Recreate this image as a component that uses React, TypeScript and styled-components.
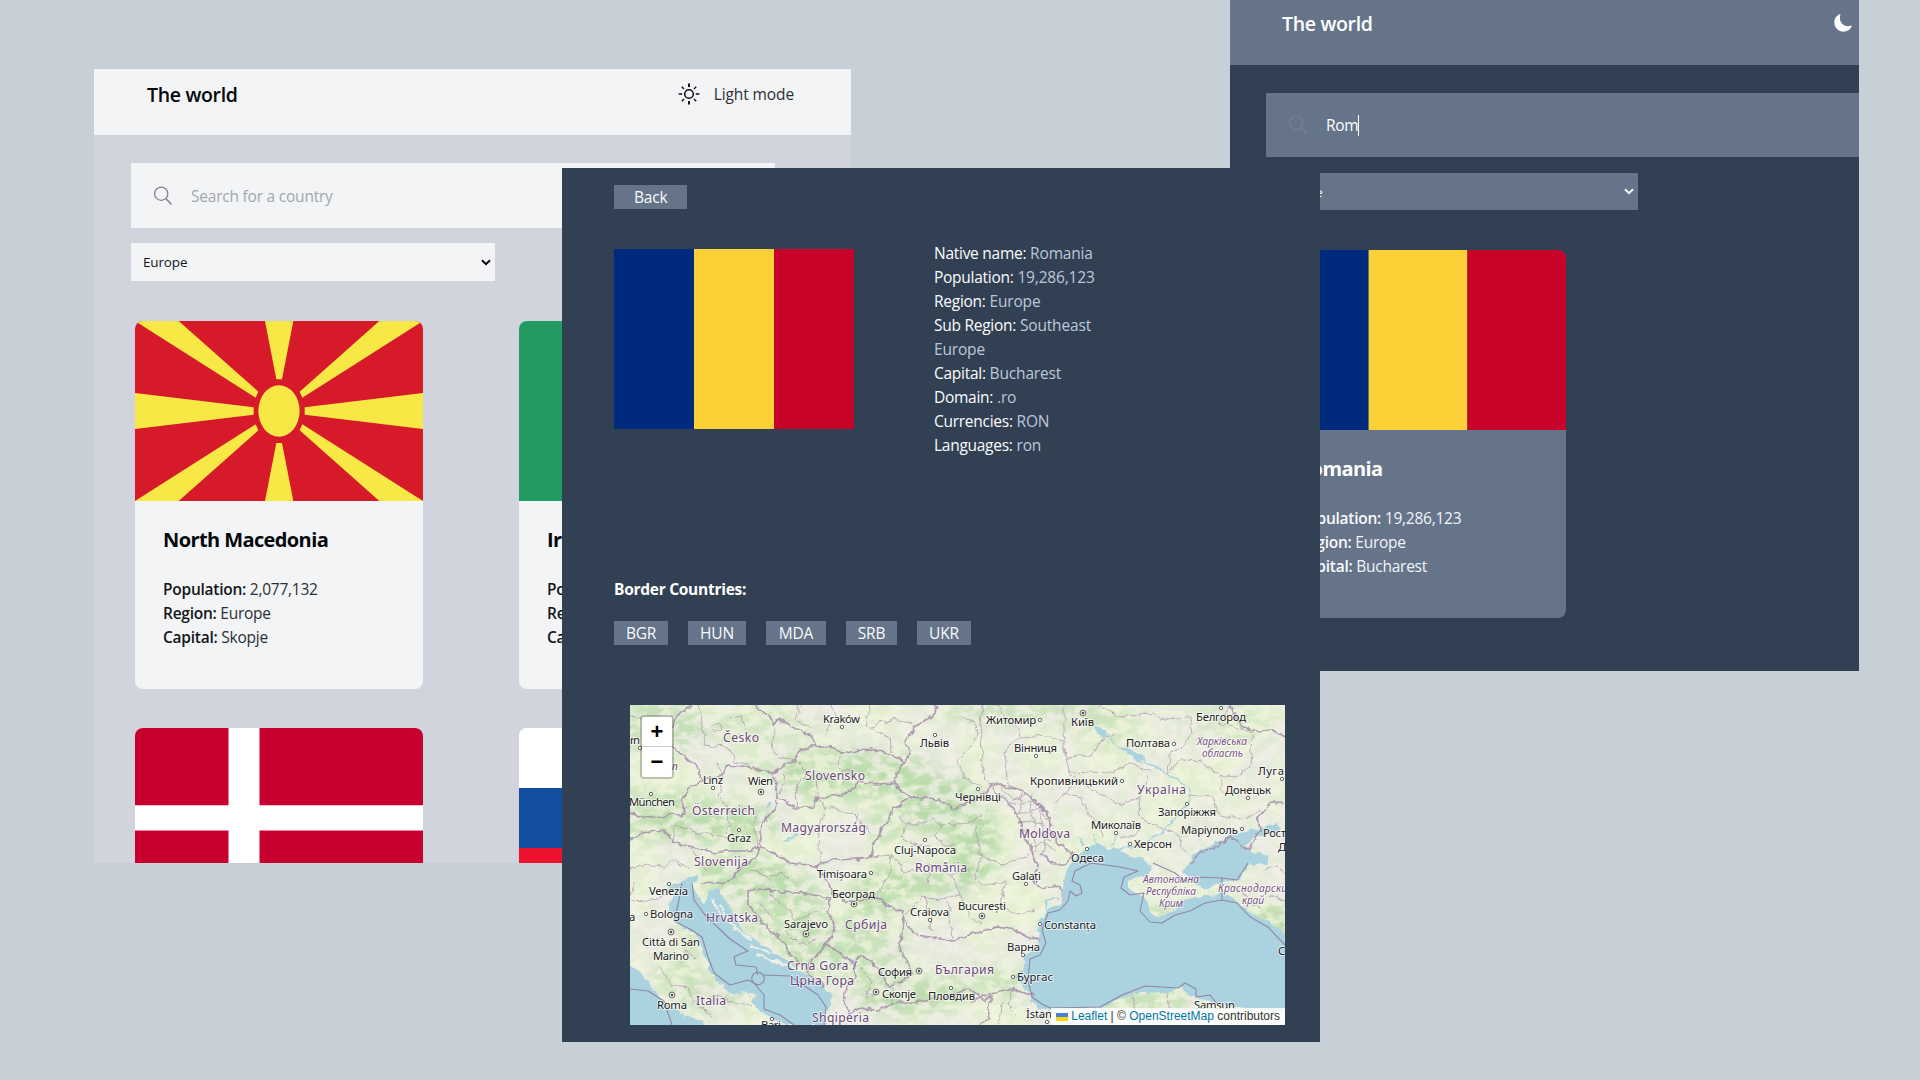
import React from "react";
import styled, { createGlobalStyle } from "styled-components";
import { IoMoon } from "react-icons/io5";

const light = {
  page: "#d1d4dc",
  surface: "#f2f4f5",
  title: "#05070b",
  label: "#14161a",
  value: "#2c2f36",
};
const dark = {
  page: "#324053",
  surface: "#657489",
  title: "#ffffff",
  label: "#f8fafc",
  value: "#f1f5f9",
};
type Palette = typeof light;

const GlobalStyle = createGlobalStyle`
  * { box-sizing: border-box; }
  body { margin: 0; background: #c8d0d7; }
  h1, h2, h3, p { margin: 0; }
`;

const Desktop = styled.main`
  position: relative;
  width: 1920px;
  height: 1080px;
  overflow: hidden;
  background: #c8d0d7;
  font-family: "Open Sans", "Noto Sans", sans-serif;
  font-size: 15.5px;
  line-height: 24px;
`;

const Window = styled.section<{ $x: number; $y: number; $w: number; $h: number; $bg: string }>`
  position: absolute;
  left: ${(p) => p.$x}px;
  top: ${(p) => p.$y}px;
  width: ${(p) => p.$w}px;
  height: ${(p) => p.$h}px;
  overflow: hidden;
  background: ${(p) => p.$bg};
`;

const Header = styled.header<{ $p: Palette; $h: number; $padTop: number; $padRight: number; $padLeft: number }>`
  display: flex;
  justify-content: space-between;
  align-items: flex-start;
  height: ${(p) => p.$h}px;
  padding: ${(p) => p.$padTop}px ${(p) => p.$padRight}px 0 ${(p) => p.$padLeft}px;
  background: ${(p) => p.$p.surface};
  color: ${(p) => p.$p.title};
`;

const Brand = styled.h1`
  font-size: 19.5px;
  font-weight: 600;
  line-height: 28px;
  letter-spacing: -0.32px;
  white-space: nowrap;
`;

const ModeSwitch = styled.div`
  display: flex;
  align-items: center;
  gap: 14px;
  height: 26px;
  color: #2c2f36;
  letter-spacing: -0.1px;
  white-space: nowrap;
`;

const MoonButton = styled.div`
  display: flex;
  align-items: center;
  height: 26px;
  color: #fff;
`;

const SearchBar = styled.div<{ $p: Palette; $w: number; $h: number; $left: number }>`
  display: flex;
  align-items: center;
  width: ${(p) => p.$w}px;
  height: ${(p) => p.$h}px;
  margin: 28px 0 0 ${(p) => p.$left}px;
  padding-left: 23px;
  gap: 19px;
  background: ${(p) => p.$p.surface};
`;

const Placeholder = styled.span`
  color: #a3a7b0;
  letter-spacing: -0.22px;
`;

const Typed = styled.span`
  border-right: 1px solid #fff;
  line-height: 21px;
  color: #fff;
  letter-spacing: -0.3px;
`;

const Select = styled.div<{ $p: Palette; $w: number; $h: number; $left: number; $top: number }>`
  display: flex;
  align-items: center;
  justify-content: space-between;
  width: ${(p) => p.$w}px;
  height: ${(p) => p.$h}px;
  margin: ${(p) => p.$top}px 0 0 ${(p) => p.$left}px;
  padding: 0 4px 0 12px;
  background: ${(p) => p.$p.surface};
  color: ${(p) => p.$p.label};
  font-size: 13.5px;
  letter-spacing: -0.15px;
`;

const CardGrid = styled.div<{ $left: number; $col: number }>`
  display: grid;
  grid-template-columns: ${(p) => p.$col}px ${(p) => p.$col}px;
  column-gap: 96px;
  row-gap: 39px;
  margin: 40px 0 0 ${(p) => p.$left}px;
`;

const Card = styled.article<{ $p: Palette }>`
  display: flex;
  flex-direction: column;
  height: 368px;
  border-radius: 8px;
  overflow: hidden;
  background: ${(p) => p.$p.surface};
`;

const CardBody = styled.div`
  padding: 25px 28px 0;
`;

const CardTitle = styled.h2<{ $p: Palette }>`
  margin-bottom: 23px;
  font-size: 20px;
  font-weight: 700;
  line-height: 28px;
  letter-spacing: -0.6px;
  white-space: nowrap;
  color: ${(p) => p.$p.title};
`;

const Fact = styled.p<{ $p: Palette }>`
  color: ${(p) => p.$p.value};
  letter-spacing: -0.25px;
`;

const FactLabel = styled.span<{ $p: Palette }>`
  font-weight: 600;
  color: ${(p) => p.$p.label};
`;

const FlagSvg = styled.svg`
  display: block;
  flex: none;
  width: 100%;
  height: 180px;
`;

const MacedoniaFlag = () => {
  const corner = "0,0 131,0 370,212 362,230";
  return (
    <FlagSvg viewBox="0 0 864 540" preserveAspectRatio="none">
      <rect width="864" height="540" fill="#d61a2a" />
      <g fill="#f8e845">
        <polygon points="390,0 475,0 441,175 424,175" />
        <polygon points="390,540 475,540 441,366 424,366" />
        <polygon points="0,216 356,259 356,281 0,324" />
        <polygon points="864,216 509,259 509,281 864,324" />
        <polygon points={corner} />
        <polygon points={corner} transform="translate(864 0) scale(-1 1)" />
        <polygon points={corner} transform="translate(0 540) scale(1 -1)" />
        <polygon points={corner} transform="translate(864 540) scale(-1 -1)" />
        <ellipse cx="432" cy="270" rx="62" ry="77" />
      </g>
    </FlagSvg>
  );
};

const DenmarkFlag = () => (
  <FlagSvg viewBox="0 0 288 180" preserveAspectRatio="none">
    <rect width="288" height="180" fill="#c7002f" />
    <path d="M93.5 0h31v180h-31zM0 77.3h288v25.2H0z" fill="#fff" />
  </FlagSvg>
);

const Stripes = ({ colors, vertical }: { colors: string[]; vertical?: boolean }) => (
  <FlagSvg viewBox="0 0 3 3" preserveAspectRatio="none">
    {colors.map((c, i) => (
      <rect key={i} x={vertical ? i : 0} y={vertical ? 0 : i} width={vertical ? 1 : 3} height={vertical ? 3 : 1} fill={c} />
    ))}
  </FlagSvg>
);
const romania = ["#002a7d", "#fbd137", "#c80329"];

const SunIcon = () => (
  <svg width="22" height="22" viewBox="-11 -11 22 22" fill="none" stroke="#0b0d10">
    <circle r="4.3" strokeWidth="1.5" />
    <path d="M0-10.5V-7M0 7V10.5" strokeWidth="1.9" />
    <path d="M-10.3 0H-6.8M6.8 0H10.3" strokeWidth="1.3" />
    <path d="M-7.2-7.2-5-5M7.2-7.2 5-5M-7.2 7.2-5 5M7.2 7.2 5 5" strokeWidth="1.4" />
  </svg>
);

const SearchIcon = ({ color }: { color: string }) => (
  <svg width="18" height="20" viewBox="0 0 18 20" fill="none" stroke={color} strokeWidth="1.3">
    <circle cx="7.2" cy="7.7" r="6.6" />
    <path d="M11.8 12.6 17.6 18.4" strokeWidth="1.5" />
  </svg>
);

const Chevron = ({ color }: { color: string }) => (
  <svg width="10" height="7" viewBox="0 0 10 7" fill="none" stroke={color} strokeWidth="2">
    <path d="M1 1.2 5 5.2 9 1.2" />
  </svg>
);

const CountryCard = ({ p, flag, name, facts }: { p: Palette; flag: React.ReactNode; name?: string; facts?: [string, string][] }) => (
  <Card $p={p}>
    {flag}
    {name && (
      <CardBody>
        <CardTitle $p={p}>{name}</CardTitle>
        {facts?.map(([k, v]) => (
          <Fact key={k} $p={p}>
            <FactLabel $p={p}>{k}:</FactLabel> {v}
          </Fact>
        ))}
      </CardBody>
    )}
  </Card>
);

const Detail = styled.div`
  display: flex;
  flex-direction: column;
  align-items: flex-start;
  padding: 17px 0 0 52px;
`;

const Button = styled.button<{ $pad: number }>`
  height: 24px;
  padding: 0 ${(p) => p.$pad}px;
  border: 0;
  background: ${dark.surface};
  color: #f8fafc;
  font: inherit;
  line-height: 24px;
  letter-spacing: -0.2px;
`;

const Summary = styled.div`
  display: flex;
  align-items: flex-start;
  gap: 80px;
  height: 336px;
  margin-top: 32px;
`;

const FlagFrame = styled.div`
  width: 240px;
  padding-top: 8px;
`;

const Facts = styled.div`
  width: 174px;
  color: #bcc8d8;
  letter-spacing: -0.17px;
`;

const DetailLabel = styled.span`
  font-weight: 500;
  color: #fbfcfe;
  letter-spacing: -0.27px;
`;

const BorderTitle = styled.h3`
  font-size: 15.5px;
  font-weight: 700;
  line-height: 24px;
  letter-spacing: -0.27px;
  color: #fff;
`;

const BorderList = styled.div`
  display: flex;
  gap: 20px;
  margin-top: 20px;
`;

const BorderButton = styled(Button)<{ $w: number }>`
  width: ${(p) => p.$w}px;
`;

const MapFrame = styled.div`
  position: relative;
  width: 655px;
  height: 320px;
  margin: 60px 0 0 16px;
  overflow: hidden;
  background: #f1efe6;
`;

const ZoomControl = styled.div`
  position: absolute;
  left: 10px;
  top: 10px;
  display: flex;
  flex-direction: column;
  border: 2px solid rgba(0, 0, 0, 0.2);
  border-radius: 4px;
  background-clip: padding-box;
`;

const ZoomButton = styled.div<{ $first?: boolean }>`
  display: flex;
  align-items: center;
  justify-content: center;
  width: 30px;
  height: 30px;
  border-bottom: ${(p) => (p.$first ? "1px solid #ccc" : "0")};
  border-radius: ${(p) => (p.$first ? "2px 2px 0 0" : "0 0 2px 2px")};
  background: #fff;
  color: #000;
  font: bold 22px/30px "Liberation Sans", Arial, sans-serif;
`;

const Attribution = styled.div`
  position: absolute;
  right: 0;
  bottom: 0;
  display: flex;
  align-items: center;
  height: 17px;
  padding: 0 5px;
  background: rgba(255, 255, 255, 0.85);
  color: #333;
  font: 12px/17px "Liberation Sans", Arial, sans-serif;
  white-space: pre;
`;

const MapLink = styled.span`
  color: #0078a8;
`;

const MiniFlag = styled.svg`
  width: 12px;
  height: 8px;
  margin-right: 3px;
`;

const MapSvg = styled.svg`
  display: block;
  font-family: "Noto Sans", "Open Sans", sans-serif;
`;

/* [text, left, baseline, width] */
type Label = [string, number, number, number];
const cities: Label[] = [
  ["rn", 0, 39, 10], ["Kraków", 193, 18, 37], ["Львів", 290, 42, 29], ["Linz", 73, 79, 20], ["Wien", 118, 80, 25],
  ["München", -1, 101, 46], ["Graz", 97, 137, 24], ["Cluj-Napoca", 264, 149, 62], ["Житомир", 356, 19, 50],
  ["Київ", 441, 21, 23], ["Вінниця", 384, 47, 43], ["Полтава", 496, 42, 44], ["Белгород", 566, 16, 50],
  ["Кропивницький", 400, 80, 88], ["Чернівці", 325, 96, 46], ["Луганськ", 628, 70, 52], ["Донецьк", 595, 89, 46],
  ["Запоріжжя", 528, 111, 58], ["Миколаїв", 461, 124, 50], ["Маріуполь", 551, 129, 57], ["Херсон", 504, 143, 38],
  ["Рост", 633, 132, 23], ["Д", 648, 146, 8], ["Одеса", 441, 157, 33], ["Venezia", 19, 190, 39], ["Bologna", 20, 213, 43],
  ["a", -1, 216, 5], ["Città di San", 12, 241, 58], ["Marino", 23, 255, 36], ["Roma", 27, 304, 30], ["Timișoara", 187, 173, 50],
  ["Београд", 202, 193, 43], ["Sarajevo", 154, 223, 44], ["Craiova", 280, 211, 39], ["София", 248, 271, 34],
  ["Скопје", 252, 293, 34], ["Пловдив", 298, 295, 47], ["Bari", 131, 324, 20], ["Galați", 382, 175, 29],
  ["București", 328, 205, 48], ["Constanța", 414, 224, 52], ["Варна", 377, 246, 33], ["Бургас", 387, 276, 36],
  ["İstan", 396, 313, 26], ["Samsun", 564, 304, 41], ["С", 648, 250, 8],
];
const countries: Label[] = [
  ["Česko", 93, 37, 36], ["Slovensko", 175, 75, 60], ["Österreich", 62, 110, 63], ["Magyarország", 151, 127, 85],
  ["Slovenija", 64, 161, 54], ["Moldova", 389, 133, 51], ["Україна", 507, 89, 49], ["România", 285, 167, 52],
  ["Hrvatska", 76, 217, 52], ["Србија", 215, 224, 42], ["Crna Gora /", 157, 265, 70], ["Црна Гора", 160, 280, 64],
  ["Italia", 66, 300, 30], ["Shqipëria", 182, 317, 57], ["България", 305, 269, 59],
];
const regions: Label[] = [
  ["Харківська", 567, 40, 50], ["область", 572, 52, 41], ["Автономна", 513, 178, 56], ["Республіка", 516, 190, 50],
  ["Крим", 529, 202, 24], ["Краснодарский", 588, 187, 75], ["край", 612, 199, 22],
];
const townDots: [number, number][] = [
  [10, 43], [212, 22], [305, 30], [83, 83], [21, 89], [109, 125], [295, 135], [410, 15], [406, 51], [544, 39], [591, 3],
  [492, 76], [348, 84], [652, 74], [618, 93], [557, 99], [486, 128], [612, 124], [500, 139], [457, 144], [39, 179],
  [16, 209], [241, 168], [300, 215], [321, 283], [396, 179], [410, 219], [393, 250], [383, 272], [417, 317], [142, 314],
];
const capitals: [number, number][] = [
  [131, 87], [453, 8], [41, 227], [42, 290], [224, 199], [176, 229], [289, 266], [246, 287], [352, 211],
];

const seas = [
  "M50 176 60 172 70 170 68 175 62 178 66 190 75 199 80 188 86 183 94 192 104 210 115 228 130 238 150 250 161 259 178 270 194 281 203 292 198 305 194 312 196 320 158 320 142 314 125 302 121 294 127 290 100 287 85 275 78 262 73 245 65 228 50 221 40 210 38 200 45 190 38 182Z",
  "M-5 256 6 264 16 274 26 286 32 296 54 310 74 316 76 325 -5 325Z",
  "M457 143 443 155 432 177 433 187 432 198 417 205 409 218 408 235 409 242 395 250 393 262 385 272 388 278 400 287 400 295 408 302 420 305 470 303 487 295 507 288 537 287 553 283 567 295 583 297 597 302 607 303 662 307V234L640 218 617 205 603 192 592 188 587 190 567 192 553 195 545 203 533 212 527 213 520 207 517 195 507 188 497 183 497 177 517 168 523 161 512 154 500 150 490 147 497 141 482 144 467 140Z",
  "M560 157 562 150 580 140 603 130 630 123 648 118 650 126 623 133 617 140 620 147 640 150 636 160 620 158 610 175 593 177 575 184 567 180 553 167Z",
  "M483 38 500 44 513 52 514 58 507 57 497 48Z",
  "M463 22 474 24 478 32 472 34Z",
  "M151 137 168 129 169 131 158 136Z",
  "M0 131 5 134 0 134ZM138 98 142 95 140 103 136 104Z",
];
const rivers = [
  "M513 53 525 62 540 70 553 78 559 84 557 99 548 106", "M478 28 484 39", "M548 108 540 120 528 130 515 138 497 143",
  "M467 142 464 130M484 142 486 130M455 141 450 134", "M225 116 228 110",
  "M415 205 418 195 428 193",
];
const borders = [
  "M60 0 45 15 36 34 50 48 66 62 72 76 60 82 52 95 55 108 40 110 20 114 0 108",
  "M72 76 90 70 98 60 120 62 143 68 150 62 165 55 172 45 180 42 187 42 182 30 160 22 150 14 143 20 138 10 128 4 124 0",
  "M187 42 200 40 212 50 225 46 240 44 258 48 276 57 279 45 275 38 285 22 303 10 307 0",
  "M276 57 268 64 264 79 245 80 230 76 214 90 200 91 187 94 185 102 168 103 148 93 143 68",
  "M264 79 280 92 264 104 258 116 245 136 240 152 225 154 202 155 185 162 170 160 160 158 148 150 132 142 130 126 136 112 146 104 148 93",
  "M130 142 118 146 95 146 80 147 60 141 42 137 34 125 12 128 0 134", "M130 142 125 152 108 165 105 174 92 178 70 177",
  "M280 92 310 94 325 104 350 92 360 80 370 80 390 85 405 95 420 112 422 128 428 140 443 148 436 158 425 158 410 150",
  "M360 80 375 94 388 112 396 132 402 148 408 160 404 178 412 184 425 180 433 186",
  "M185 162 198 176 202 188 215 196 230 196 245 192 257 201 272 206 277 218 285 230 300 232 322 236 345 228 365 222 385 225 400 233 409 234",
  "M118 186 130 184 150 187 170 188 190 191 202 194M118 186 118 200 130 214 150 234 160 248 175 262 182 265",
  "M202 194 196 205 205 220 202 232 195 240 190 248 178 258 180 270 194 282",
  "M195 240 210 248 224 258 230 250 240 256 252 268 258 282 270 278 282 268 275 254 270 246 272 225 275 212",
  "M224 258 226 272 216 282 214 300 220 308 232 302 245 306 265 298 285 298 300 294 325 290 340 284 355 296 362 290 358 312 350 320",
  "M340 296 360 288 380 284 404 290", "M600 0 612 22 622 26 640 24 655 32", "M655 98 640 98 628 112 630 124 620 145 600 132 585 142 570 148 560 160",
];
const coastLimits = [
  "M52 178 48 200 44 216 60 224 72 232 78 252 84 268 100 280 118 275 124 278 134 290 134 304 150 310 164 320",
  "M62 178 64 195 75 210 100 234 118 246 110 249 104 252 106 260 126 262 128 270 M134 272a6 6 0 1 1-12 3a6 6 0 1 1 12-3 M134 270 160 271 188 290 196 302 194 320",
  "M0 284 18 286 34 296 42 320",
  "M461 158 445 166 442 176 450 180 452 188 446 191 440 186 438 196 430 205 418 208 412 225 416 238 410 250 400 254 398 275 402 292 412 299 420 303",
  "M461 158 490 162 508 166 494 172 491 183 500 190 514 188 510 206 520 217 532 218 545 210 560 206 575 198 592 195 607 198 620 212 638 222 655 240",
  "M420 303 470 302 492 290 515 281 548 283 555 278 566 284 566 292 580 290 588 300",
  "M523 158 545 168 555 176 565 172 592 173 607 175 618 158 M592 173 592 195",
];
const provinces = [
  "M70 0 72 20 74 40 98 42 105 56 120 60M100 12 112 10 116 30 128 34M0 12 20 16 32 34M145 22 142 44 150 52 165 55",
  "M88 58 92 75 88 92 96 100 100 120 94 128M42 137 45 120 68 128 98 132M130 142 122 120 128 110",
  "M170 55 175 72 165 82 168 103M187 70 188 92M155 70 150 90M210 52 208 62 220 66 212 78",
  "M195 100 190 118 188 140 192 158M185 94 205 105 225 110 240 128",
  "M195 30 205 10 200 0M240 0 236 22 260 32 262 46M282 18 262 14 240 22M170 0 165 14 180 24",
  "M352 0 350 20 354 72 362 80M366 0 376 14 390 24 388 32 374 48 378 80 392 86M330 10 348 20 344 38 328 55 334 72 352 82",
  "M388 32 420 30 432 36 436 52 462 50 468 38 485 28M434 0 434 30 436 52 440 68 450 76 435 88 425 98",
  "M470 0 490 12 515 8 535 14 560 12 562 30 550 42 540 50 538 68M440 66 480 68 500 58 520 66M600 0 588 18 622 28",
  "M538 68 552 55 572 56 590 70 605 72 620 62 622 30M450 76 475 92 490 100 510 92 518 70M510 92 508 108 520 120 550 130 555 148",
  "M432 88 452 92 456 108 470 118 472 132M557 90 582 92 590 110 610 115 630 105M590 70 592 88M490 134 508 128 508 118",
  "M270 110 275 120 290 118 302 114 310 120 306 130 312 140 325 140M275 120 272 132 282 138 300 140M310 120 340 118 352 110",
  "M240 152 262 150 275 168 300 160 320 168 330 190 310 195 292 192 275 212M345 120 350 150 372 160 400 150M352 150 345 172 355 180 376 176",
  "M262 150 258 175 245 190M300 160 298 180M330 190 340 212 350 220M376 176 370 200 388 210 404 205M320 168 340 165M296 192 302 226M318 196 322 234",
  "M120 165 138 172 150 168 160 175M140 188 150 200 160 205 165 215 188 205M155 225 170 240 185 235M130 200 145 214",
  "M0 164 18 158 36 162 44 155 60 164M6 178 0 190M60 141 68 155 78 166M0 195 18 196 36 190M50 258 55 245 66 255M30 262 42 280 60 282 62 300",
  "M84 288 98 296 120 300M66 298 82 312M230 262 240 275 236 295M262 282 262 300M245 290 232 285M382 286 378 300 388 310M370 320 372 298",
  "M503 288 506 305M537 287 538 303M640 190 655 195M596 180 612 186 630 205M635 165 648 160 655 168M432 187 432 198",
];
const moldova = [
  "M372 84 384 94 396 90 406 98M378 96 392 100 404 94 414 106M384 108 398 108 408 102 420 118M388 118 402 116 414 120 424 128M396 130 410 128 420 136M400 142 414 138 426 146M390 88 392 104 386 114M402 88 400 106 406 118 402 130 406 148M412 102 410 118 416 134 412 150M396 122 398 136",
];

/* [cx, cy, rx, ry, strength] */
const forests: [number, number, number, number, number][] = [
  [30, 22, 45, 28, 0.7], [20, 110, 70, 26, 0.8], [90, 118, 60, 22, 0.9], [215, 70, 70, 26, 0.9], [270, 70, 40, 20, 0.8],
  [310, 100, 40, 30, 1], [345, 140, 25, 40, 1], [250, 185, 28, 24, 0.9], [290, 178, 60, 14, 0.9], [115, 170, 50, 20, 0.9],
  [150, 200, 45, 35, 0.8], [195, 245, 45, 28, 0.8], [240, 240, 35, 40, 0.6], [280, 290, 55, 20, 0.9], [60, 240, 12, 40, 0.4],
  [80, 290, 40, 20, 0.5], [45, 270, 22, 25, 0.4], [645, 218, 22, 18, 1], [530, 202, 22, 10, 0.6], [385, 280, 22, 12, 0.8],
  [520, 296, 60, 9, 0.8], [345, 275, 30, 14, 0.5], [400, 8, 90, 12, 0.6], [480, 25, 30, 20, 0.4], [600, 20, 50, 20, 0.3],
  [560, 120, 15, 15, 0.3], [255, 120, 20, 20, 0.6], [130, 20, 60, 20, 0.4], [150, 60, 50, 12, 0.4],
];

const WorldMap = () => (
  <MapSvg width="655" height="320" viewBox="0 0 655 320">
    <defs>
      <filter id="speckle" x="0" y="0" width="100%" height="100%" colorInterpolationFilters="sRGB">
        <feTurbulence type="fractalNoise" baseFrequency="0.07 0.1" numOctaves="5" seed="8" />
        <feColorMatrix values="0 0 0 0 0.73  0 0 0 0 0.86  0 0 0 0 0.67  4.5 0 0 0 -1.75" />
      </filter>
      <filter id="tone" x="0" y="0" width="100%" height="100%" colorInterpolationFilters="sRGB">
        <feTurbulence type="fractalNoise" baseFrequency="0.018" numOctaves="4" seed="3" />
        <feColorMatrix values="0 0 0 0 0.945  0 0 0 0 0.96  0 0 0 0 0.87  4 0 0 0 -1.5" />
      </filter>
      <filter id="rough" x="-5%" y="-5%" width="110%" height="110%">
        <feTurbulence type="fractalNoise" baseFrequency="0.11" numOctaves="3" seed="5" />
        <feDisplacementMap in="SourceGraphic" scale="7" xChannelSelector="R" yChannelSelector="G" />
      </filter>
      <filter id="soft">
        <feGaussianBlur stdDeviation="7" />
      </filter>
      <mask id="woods">
        <rect width="655" height="320" fill="#3a3a3a" />
        <g filter="url(#soft)" fill="#fff">
          {forests.map(([cx, cy, rx, ry, o], i) => (
            <ellipse key={i} cx={cx} cy={cy} rx={rx} ry={ry} opacity={o} />
          ))}
        </g>
      </mask>
    </defs>
    <rect width="655" height="320" fill="#f2efe9" />
    <rect width="655" height="320" filter="url(#tone)" />
    <g mask="url(#woods)">
      <rect width="655" height="320" fill="#cfe3c0" opacity="0.4" />
      <rect width="655" height="320" filter="url(#speckle)" />
    </g>
    <g filter="url(#rough)">
      <g fill="#aad3df">
        {seas.map((d) => (
          <path key={d} d={d} />
        ))}
      </g>
      <path d="M82 192 92 212M90 200 104 224M98 216 122 236M120 240 142 248M128 250 150 258M140 256 166 264" stroke="#eef0e4" strokeWidth="2" fill="none" />
      <g fill="none" stroke="#aad3df" strokeWidth="1.5">
        {rivers.map((d) => (
          <path key={d} d={d} />
        ))}
      </g>
      <g fill="none" stroke="#a78fae" strokeWidth="0.9" opacity="0.75">
        {[...provinces, ...moldova].map((d) => (
          <path key={d} d={d} />
        ))}
        <ellipse cx="87" cy="22" rx="5" ry="3.5" />
      </g>
      <g fill="none" stroke="#a48dab" strokeWidth="1.7" opacity="0.85" strokeLinejoin="round">
        {borders.map((d) => (
          <path key={d} d={d} />
        ))}
      </g>
    </g>
    <g fill="none" stroke="#8f86a8" strokeWidth="1.1" strokeLinejoin="round">
      {coastLimits.map((d) => (
        <path key={d} d={d} />
      ))}
    </g>
    <g fill="#fff" stroke="#444" strokeWidth="0.8">
      {townDots.map(([x, y], i) => (
        <circle key={i} cx={x} cy={y} r="1.7" />
      ))}
      {capitals.map(([x, y], i) => (
        <g key={i}>
          <circle cx={x} cy={y} r="2.9" />
          <circle cx={x} cy={y} r="1" fill="#222" />
        </g>
      ))}
    </g>
    <g paintOrder="stroke" stroke="#fff" strokeOpacity="0.65" strokeWidth="2" strokeLinejoin="round">
      <g fontSize="11.3" fill="#222">
        {cities.map(([t, x, y, w]) => (
          <text key={t} x={x} y={y} textLength={w}>{t}</text>
        ))}
      </g>
      <g fontSize="12.2" fill="#6b4779">
        {countries.map(([t, x, y, w]) => (
          <text key={t} x={x} y={y} textLength={w}>{t}</text>
        ))}
        <text x="42" y="65" fontSize="10" fontStyle="italic">n</text>
      </g>
      <g fontSize="10.2" fontStyle="italic" fill="#7a5488">
        {regions.map(([t, x, y, w]) => (
          <text key={t} x={x} y={y} textLength={w}>{t}</text>
        ))}
      </g>
    </g>
  </MapSvg>
);

const details: [string, string][] = [
  ["Native name", "Romania"],
  ["Population", "19,286,123"],
  ["Region", "Europe"],
  ["Sub Region", "Southeast Europe"],
  ["Capital", "Bucharest"],
  ["Domain", ".ro"],
  ["Currencies", "RON"],
  ["Languages", "ron"],
];

const neighbours: [string, number][] = [["BGR", 54], ["HUN", 58], ["MDA", 60], ["SRB", 51], ["UKR", 54]];

export default function App() {
  return (
    <Desktop>
      <GlobalStyle />
      <Window $x={94} $y={69} $w={757} $h={794} $bg={light.page}>
        <Header $p={light} $h={66} $padTop={12} $padRight={57} $padLeft={53}>
          <Brand>The world</Brand>
          <ModeSwitch>
            <SunIcon />
            Light mode
          </ModeSwitch>
        </Header>
        <SearchBar $p={light} $w={644} $h={65} $left={37}>
          <SearchIcon color="#85878a" />
          <Placeholder>Search for a country</Placeholder>
        </SearchBar>
        <Select $p={light} $w={364} $h={38} $left={37} $top={15}>
          Europe
          <Chevron color="#05070b" />
        </Select>
        <CardGrid $left={41} $col={288}>
          <CountryCard p={light} flag={<MacedoniaFlag />} name="North Macedonia" facts={[["Population", "2,077,132"], ["Region", "Europe"], ["Capital", "Skopje"]]} />
          <CountryCard p={light} flag={<Stripes vertical colors={["#229b63", "#fff", "#f58232"]} />} name="Ireland" facts={[["Population", "4,994,724"], ["Region", "Europe"], ["Capital", "Dublin"]]} />
          <CountryCard p={light} flag={<DenmarkFlag />} />
          <CountryCard p={light} flag={<Stripes colors={["#fff", "#134f9f", "#ed122d"]} />} />
        </CardGrid>
      </Window>

      <Window $x={1230} $y={0} $w={629} $h={671} $bg={dark.page}>
        <Header $p={dark} $h={65} $padTop={10} $padRight={6} $padLeft={52}>
          <Brand>The world</Brand>
          <MoonButton>
            <IoMoon size={20} />
          </MoonButton>
        </Header>
        <SearchBar $p={dark} $w={644} $h={64} $left={36}>
          <SearchIcon color="#7d8085" />
          <Typed>Rom</Typed>
        </SearchBar>
        <Select $p={dark} $w={372} $h={37} $left={36} $top={16}>
          Europe
          <Chevron color="#fff" />
        </Select>
        <CardGrid $left={40} $col={296}>
          <CountryCard p={dark} flag={<Stripes vertical colors={romania} />} name="Romania" facts={[["Population", "19,286,123"], ["Region", "Europe"], ["Capital", "Bucharest"]]} />
        </CardGrid>
      </Window>

      <Window $x={562} $y={168} $w={758} $h={874} $bg={dark.page}>
        <Detail>
          <Button $pad={20}>Back</Button>
          <Summary>
            <FlagFrame>
              <Stripes vertical colors={romania} />
            </FlagFrame>
            <Facts>
              {details.map(([k, v]) => (
                <p key={k}>
                  <DetailLabel>{k}:</DetailLabel> {v}
                </p>
              ))}
            </Facts>
          </Summary>
          <BorderTitle>Border Countries:</BorderTitle>
          <BorderList>
            {neighbours.map(([code, w]) => (
              <BorderButton key={code} $pad={0} $w={w}>
                {code}
              </BorderButton>
            ))}
          </BorderList>
          <MapFrame>
            <WorldMap />
            <ZoomControl>
              <ZoomButton $first>+</ZoomButton>
              <ZoomButton>−</ZoomButton>
            </ZoomControl>
            <Attribution>
              <MiniFlag viewBox="0 0 12 8">
                <rect width="12" height="4" fill="#4c7be1" />
                <rect y="4" width="12" height="4" fill="#ffd500" />
              </MiniFlag>
              <MapLink>Leaflet</MapLink>
              {" | © "}
              <MapLink>OpenStreetMap</MapLink>
              {" contributors"}
            </Attribution>
          </MapFrame>
        </Detail>
      </Window>
    </Desktop>
  );
}
